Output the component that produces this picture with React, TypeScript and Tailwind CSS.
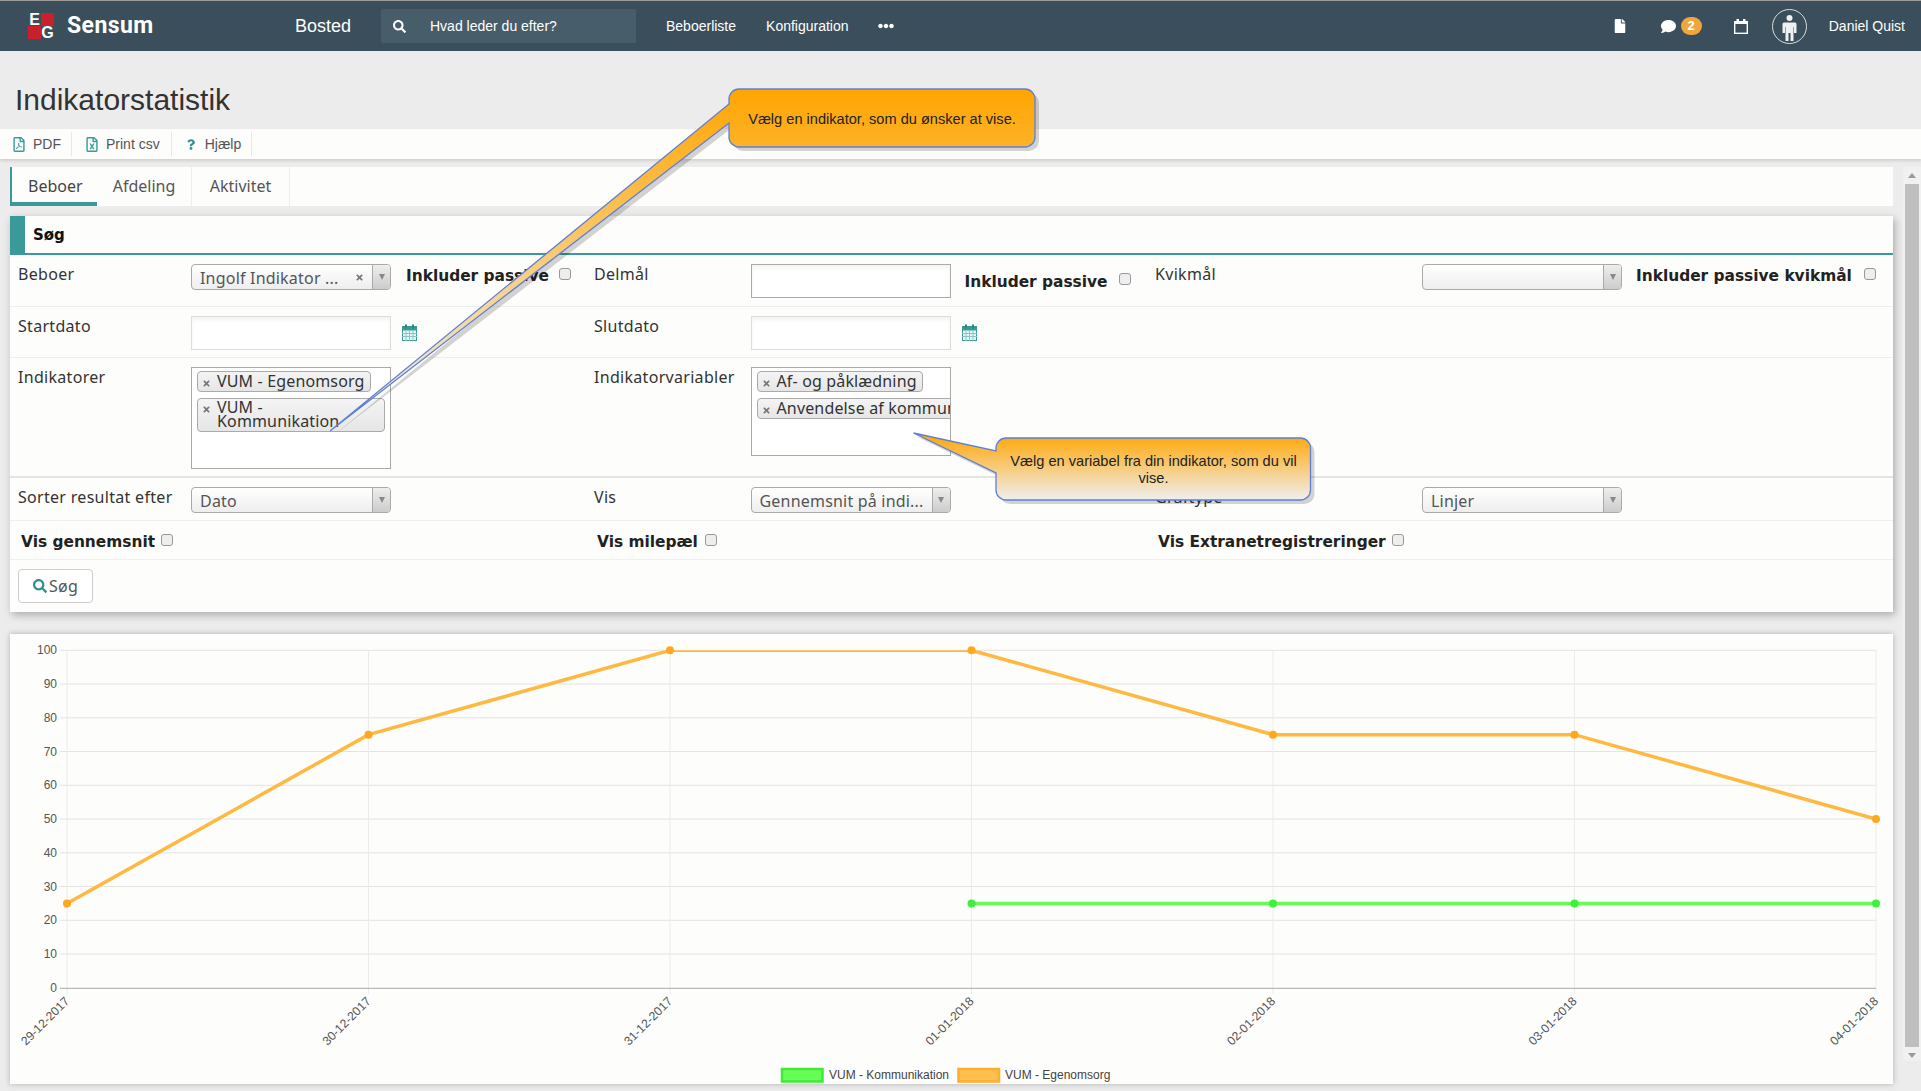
import React from "react";
import { FaSearch, FaRegFilePdf, FaRegFileExcel, FaQuestion, FaFile, FaComment, FaEllipsisH, FaTimes } from "react-icons/fa";

const Arrow = () => (
  <svg width="8" height="6" viewBox="0 0 8 6"><path d="M1 0h6L4 6z" fill="#888" /></svg>
);

const Check = () => (
  <input type="checkbox" className="appearance-none w-[12px] h-[12px] rounded-[3px] border border-[#999] bg-[#eeeeee] shrink-0 block" />
);

const Select = ({ text, clear, narrowText }: { text?: string; clear?: boolean; narrowText?: boolean }) => (
  <div className="w-[200px] h-[26px] shrink-0 flex rounded-[4px] border border-[#aaa] bg-gradient-to-b from-white to-[#eeeeee] overflow-hidden">
    <div className={"flex-1 flex items-center justify-between pl-[8px] pt-[1px] text-[#555] text-[16px] tracking-[0.2px] leading-[20px] whitespace-nowrap overflow-hidden " + (narrowText ? "pr-[2px]" : "pr-[8px]")}>
      <span>{text}</span>
      {clear && <FaTimes className="text-[#777] text-[9px] shrink-0" />}
    </div>
    <div className="w-[18px] shrink-0 border-l border-[#aaa] bg-gradient-to-b from-[#eeeeee] to-[#cccccc] flex items-center justify-center">
      <Arrow />
    </div>
  </div>
);

const Input = ({ h, light }: { h: number; light?: boolean }) => (
  <div
    className={"w-[200px] shrink-0 bg-white border shadow-[inset_0_3px_4px_rgba(0,0,0,0.05)] " + (light ? "border-[#dddddd]" : "border-[#aaaaaa]")}
    style={{ height: h }}
  />
);

const Cal = () => (
  <svg width="15" height="17" viewBox="0 0 15 17" className="shrink-0">
    <rect x="0.5" y="2.5" width="14" height="14" fill="#e8f4f4" stroke="#3a9a9a" strokeWidth="1" />
    <rect x="0.5" y="2.5" width="14" height="4" fill="#3a9a9a" />
    <rect x="3" y="0.5" width="2" height="4" fill="#2e8585" />
    <rect x="10" y="0.5" width="2" height="4" fill="#2e8585" />
    <path d="M0 9.5h15M0 12.5h15M4 6v11M7.5 6v11M11 6v11" stroke="#8cc4c4" strokeWidth="1" />
  </svg>
);

const Tag = ({ children, className }: { children: React.ReactNode; className?: string }) => (
  <div className={"flex items-start border border-[#aaa] rounded-[4px] bg-gradient-to-b from-[#f4f4f4] to-[#e6e6e6] text-[#333] text-[16px] tracking-[0.15px] leading-[14px] shrink-0 whitespace-nowrap " + (className ?? "")}>
    <FaTimes className="text-[#777] text-[9px] ml-[4px] mr-[6px] mt-[5px] shrink-0" />
    <span>{children}</span>
  </div>
);

const Label = ({ w, children }: { w: number; children: React.ReactNode }) => (
  <div className="shrink-0 text-[16px] tracking-[0.3px] leading-[20px] text-[#333]" style={{ width: w }}>{children}</div>
);

const Bold = ({ children, className }: { children: React.ReactNode; className?: string }) => (
  <span className={"font-['DejaVu_Sans',sans-serif] font-bold text-[15.4px] leading-[20px] text-[#222] whitespace-nowrap " + (className ?? "")}>{children}</span>
);

const Row = ({ h, thick, children }: { h: number; thick?: boolean; children: React.ReactNode }) => (
  <div
    className={"grid grid-cols-[576px_561px_1fr] " + (thick ? "border-b-2 border-[#e4e4e4]" : "border-b border-[#eeeeee]")}
    style={{ height: h }}
  >
    {children}
  </div>
);

const Cell = ({ children, className }: { children?: React.ReactNode; className?: string }) => (
  <div className={"flex items-start pl-[8px] pt-[9px] " + (className ?? "")}>{children}</div>
);

const xs = [67, 368.5, 670, 971.5, 1273, 1574.5, 1876];
const dates = ["29-12-2017", "30-12-2017", "31-12-2017", "01-01-2018", "02-01-2018", "03-01-2018", "04-01-2018"];
const yOf = (v: number) => 987.8 - v * 3.375;
const orange = [25, 75, 100, 100, 75, 75, 50];
const green: [number, number][] = [[3, 25], [4, 25], [5, 25], [6, 25]];

const Chart = () => (
  <svg viewBox="10 634 1883 450" width="1883" height="450" className="block">
    <defs>
      <clipPath id="plot"><rect x="67" y="650.3" width="1809" height="338" /></clipPath>
    </defs>
    {[0, 10, 20, 30, 40, 50, 60, 70, 80, 90, 100].map((v) => (
      <g key={v}>
        {v > 0 && <line x1="60" x2="1876" y1={yOf(v)} y2={yOf(v)} stroke="#e3e3e3" strokeWidth="1" />}
        <text x="57" y={yOf(v) + 4} textAnchor="end" fontSize="12" fill="#555" fontFamily="Liberation Sans">{v}</text>
      </g>
    ))}
    {xs.map((x) => (
      <line key={x} x1={x} x2={x} y1="650" y2="994" stroke="#ececec" strokeWidth="1" />
    ))}
    <line x1="60" x2="1876" y1="988.3" y2="988.3" stroke="#a8a8a8" strokeWidth="1" />
    {xs.map((x, i) => (
      <text key={x} x={x + 3} y="1002" textAnchor="end" fontSize="12.2" fill="#555" fontFamily="Liberation Sans" transform={`rotate(-45 ${x + 3} 1002)`}>{dates[i]}</text>
    ))}
    <g clipPath="url(#plot)">
      <polyline fill="none" stroke="#ffb840" strokeWidth="3.5" points={orange.map((v, i) => `${xs[i]},${yOf(v)}`).join(" ")} />
      <polyline fill="none" stroke="#66fb55" strokeWidth="3.5" points={green.map(([i, v]) => `${xs[i]},${yOf(v)}`).join(" ")} />
    </g>
    {orange.map((v, i) => <circle key={i} cx={xs[i]} cy={yOf(v)} r="4" fill="#ffa81e" />)}
    {green.map(([i, v]) => <circle key={i} cx={xs[i]} cy={yOf(v)} r="4" fill="#3df03d" />)}
    <rect x="782" y="1069" width="40.5" height="12.5" fill="#66ff55" stroke="#42e83a" strokeWidth="2.5" />
    <text x="829" y="1079" fontSize="12" fill="#444" fontFamily="Liberation Sans">VUM - Kommunikation</text>
    <rect x="958.5" y="1069" width="40.5" height="12.5" fill="#ffc04f" stroke="#ffad2a" strokeWidth="2.5" />
    <text x="1005" y="1079" fontSize="12" fill="#444" fontFamily="Liberation Sans">VUM - Egenomsorg</text>
  </svg>
);

const bubble1 = "M739,89 H1025 A10,10 0 0 1 1035,99 V137 A10,10 0 0 1 1025,147 H739 A10,10 0 0 1 729,137 V123 L330,431 L729,104 V99 A10,10 0 0 1 739,89 Z";
const bubble2 = "M1006,438 H1300.5 A10,10 0 0 1 1310.5,448 V490 A10,10 0 0 1 1300.5,500 H1006 A10,10 0 0 1 996,490 V473 L913.5,433 L996,451 V448 A10,10 0 0 1 1006,438 Z";

const Callouts = () => (
  <>
    <svg viewBox="0 0 1921 1091" width="1921" height="1091" className="absolute left-0 top-0 pointer-events-none">
      <defs>
        <linearGradient id="g1" gradientUnits="userSpaceOnUse" x1="0" y1="89" x2="0" y2="431">
          <stop offset="0" stopColor="#ffa500" />
          <stop offset="1" stopColor="#f2f2f0" />
        </linearGradient>
        <linearGradient id="g2" gradientUnits="userSpaceOnUse" x1="0" y1="433" x2="0" y2="500">
          <stop offset="0" stopColor="#ffa500" />
          <stop offset="1" stopColor="#efefef" />
        </linearGradient>
      </defs>
      <path d={bubble1} fill="#000" opacity="0.17" transform="translate(4 4)" />
      <path d={bubble1} fill="url(#g1)" stroke="#5f7ed6" strokeWidth="1.3" />
      <path d={bubble2} fill="#000" opacity="0.17" transform="translate(4 4)" />
      <path d={bubble2} fill="url(#g2)" stroke="#5f7ed6" strokeWidth="1.3" />
    </svg>
    <div className="absolute left-[729px] top-[91px] w-[306px] h-[58px] flex items-center justify-center text-[14.6px] text-[#222]">
      Vælg en indikator, som du ønsker at vise.
    </div>
    <div className="absolute left-[1004px] top-[453px] w-[299px] text-center text-[14.6px] leading-[17px] text-[#222]">
      Vælg en variabel fra din indikator, som du vil vise.
    </div>
  </>
);

const Logo = () => (
  <div className="grid grid-cols-[13px_13px] grid-rows-[13px_13px] font-bold text-white text-[16px] leading-[13px] text-center w-[26px] h-[26px]">
    <span>E</span>
    <span className="bg-[#c8202c]" />
    <span className="bg-[#c8202c]" />
    <span>G</span>
  </div>
);

export default function App() {
  return (
    <div className="relative w-[1921px] h-[1091px] overflow-hidden bg-[#ececec] font-['Liberation_Sans',Arial,sans-serif]">
      <header className="h-[51px] bg-[#3a4f5b] border-t border-[#9a9a9a] flex items-center text-white text-[14px]">
        <div className="ml-[28px] w-[39px]"><Logo /></div>
        <span className="font-['Roboto',sans-serif] font-bold text-[23px] leading-none w-[228px] -mt-[2px] tracking-[0.4px]">Sensum</span>
        <span className="text-[18px] w-[86px]">Bosted</span>
        <div className="w-[255px] h-[34px] rounded-[2px] bg-[#475d69] flex items-center pl-[12px] mr-[30px]">
          <FaSearch className="text-[13px] mr-[24px]" />
          <span>Hvad leder du efter?</span>
        </div>
        <span className="mr-[30px]">Beboerliste</span>
        <span className="mr-[29px]">Konfiguration</span>
        <FaEllipsisH className="text-[16px]" />
        <div className="ml-auto flex items-center">
          <FaFile className="text-[14px] mr-[34px]" />
          <FaComment className="text-[15px] mr-[5px]" />
          <span className="w-[21px] h-[18px] rounded-full bg-[#f0a63f] font-bold text-[13px] flex items-center justify-center mr-[32px]">2</span>
          <svg width="14" height="15" viewBox="0 0 14 15" className="mr-[24px]">
            <rect x="0.7" y="2.7" width="12.6" height="11.6" fill="none" stroke="#fff" strokeWidth="1.4" />
            <rect x="0" y="2" width="14" height="3" fill="#fff" />
            <rect x="2.5" y="0" width="2.5" height="3" fill="#fff" />
            <rect x="9" y="0" width="2.5" height="3" fill="#fff" />
          </svg>
          <svg width="35" height="35" viewBox="0 0 35 35" className="mr-[22px]">
            <circle cx="17.5" cy="17.5" r="17" fill="none" stroke="#d8dde0" strokeWidth="1" />
            <circle cx="17.5" cy="9" r="3" fill="#eef0f2" />
            <path d="M12 13.5h11a1.500 1.500 0 0 1 1.500 1.500V24H22v-6h-.5v14h-3v-8h-2v8h-3V18H13v6h-2.500V15A1.500 1.500 0 0 1 12 13.500z" fill="#eef0f2" />
          </svg>
          <span className="mr-[16px]">Daniel Quist</span>
        </div>
      </header>

      <div className="h-[78px] pl-[15px] pt-[31px] text-[30px] leading-[36px] text-[#333]">Indikatorstatistik</div>

      <div className="h-[30px] bg-[#fdfdfb] shadow-[0_2px_3px_rgba(0,0,0,0.12)] flex items-center text-[14px] text-[#555] pl-[13px]">
        <div className="flex items-center h-[24px] pr-[10px] border-r border-[#e8e8e8]">
          <FaRegFilePdf className="text-[#3a9a9a] w-[12px] h-[15px] mr-[8px]" />PDF
        </div>
        <div className="flex items-center h-[24px] pl-[14px] pr-[11px] border-r border-[#e8e8e8]">
          <FaRegFileExcel className="text-[#3a9a9a] w-[12px] h-[15px] mr-[8px]" />Print csv
        </div>
        <div className="flex items-center h-[24px] pl-[15px] pr-[10px] border-r border-[#e8e8e8]">
          <FaQuestion className="text-[#2e8f8f] w-[8px] h-[11px] mr-[10px]" />Hjælp
        </div>
      </div>

      <div className="flex pt-[8px] pl-[10px] gap-[10px] h-[902px]">
        <main className="w-[1883px] shrink-0 font-['Noto_Sans',sans-serif]">
          <nav className="h-[39px] bg-[#fdfdfb] flex text-[16px] text-[#555]">
            <div className="w-[87px] border-l-2 border-b-4 border-[#3a9a9a] pl-[16px] pt-[2px] flex items-center text-[#444]">Beboer</div>
            <div className="w-[95px] pb-[2px] border-r border-[#eeeeee] flex items-center justify-center">Afdeling</div>
            <div className="w-[98px] pb-[2px] border-r border-[#eeeeee] flex items-center justify-center">Aktivitet</div>
          </nav>

          <section className="mt-[10px] bg-[#fdfdfb] shadow-[2px_3px_8px_rgba(0,0,0,0.28)]">
            <div className="h-[39px] flex border-b-2 border-[#3a9a9a]">
              <div className="w-[15px] bg-[#3a9a9a]" />
              <span className="pl-[8px] font-['DejaVu_Sans',sans-serif] font-bold text-[15px] text-[#111] leading-[39px]">Søg</span>
            </div>

            <Row h={52}>
              <Cell>
                <Label w={173}>Beboer</Label>
                <Select text="Ingolf Indikator ..." clear />
                <Bold className="ml-[15px] mt-[2px]">Inkluder passive</Bold>
                <span className="ml-[10px] mt-[4px]"><Check /></span>
              </Cell>
              <Cell>
                <Label w={156.5}>Delmål</Label>
                <Input h={34} />
                <Bold className="ml-[14px] mt-[8px]">Inkluder passive</Bold>
                <span className="ml-[11px] mt-[9px]"><Check /></span>
              </Cell>
              <Cell>
                <Label w={267}>Kvikmål</Label>
                <Select />
                <Bold className="ml-[14px] mt-[2px]">Inkluder passive kvikmål</Bold>
                <span className="ml-[12px] mt-[4px]"><Check /></span>
              </Cell>
            </Row>

            <Row h={51}>
              <Cell>
                <Label w={173}>Startdato</Label>
                <Input h={34} light />
                <span className="ml-[11px] mt-[8px]"><Cal /></span>
              </Cell>
              <Cell>
                <Label w={156.5}>Slutdato</Label>
                <Input h={34} light />
                <span className="ml-[11px] mt-[8px]"><Cal /></span>
              </Cell>
              <Cell />
            </Row>

            <Row h={120} thick>
              <Cell>
                <Label w={173}>Indikatorer</Label>
                <div className="w-[200px] h-[102px] shrink-0 bg-white border border-[#aaa] pl-[5px] pt-[3px] flex flex-col items-start gap-[6px] overflow-hidden">
                  <Tag className="h-[21px] pt-[2px] pr-[5px]">VUM - Egenomsorg</Tag>
                  <Tag className="w-[188px] h-[34px] pt-[1px] whitespace-normal">VUM -<br />Kommunikation</Tag>
                </div>
              </Cell>
              <Cell>
                <Label w={156.5}>Indikatorvariabler</Label>
                <div className="w-[200px] h-[89px] shrink-0 bg-white border border-[#aaa] pl-[5px] pt-[3px] flex flex-col items-start gap-[6px] overflow-hidden">
                  <Tag className="h-[21px] pt-[2px] pr-[5px]">Af- og påklædning</Tag>
                  <Tag className="h-[21px] pt-[2px] pr-[5px]">Anvendelse af kommunikation</Tag>
                </div>
              </Cell>
              <Cell />
            </Row>

            <Row h={43}>
              <Cell>
                <Label w={173}>Sorter resultat efter</Label>
                <Select text="Dato" />
              </Cell>
              <Cell>
                <Label w={156.5}>Vis</Label>
                <Select text="Gennemsnit på indi..." narrowText />
              </Cell>
              <Cell>
                <Label w={267}>Graftype</Label>
                <Select text="Linjer" />
              </Cell>
            </Row>

            <Row h={39}>
              <Cell className="pl-[11px] pt-[11px]">
                <Bold>Vis gennemsnit</Bold>
                <span className="ml-[6px] mt-[2px]"><Check /></span>
              </Cell>
              <Cell className="pl-[11px] pt-[11px]">
                <Bold>Vis milepæl</Bold>
                <span className="ml-[7px] mt-[2px]"><Check /></span>
              </Cell>
              <Cell className="pl-[11px] pt-[11px]">
                <Bold>Vis Extranetregistreringer</Bold>
                <span className="ml-[6px] mt-[2px]"><Check /></span>
              </Cell>
            </Row>

            <div className="h-[52px] pl-[8px] pt-[9px]">
              <button className="w-[75px] h-[34px] rounded-[4px] border border-[#ccc] bg-white flex items-center justify-center text-[16px] tracking-[0.3px] text-[#555]">
                <FaSearch className="text-[#2e8f8f] text-[14px] mr-[2px]" />Søg
              </button>
            </div>
          </section>

          <section className="mt-[22px] bg-[#fdfdfb] shadow-[0_0_6px_rgba(0,0,0,0.25)]">
            <Chart />
          </section>
        </main>

        <aside className="w-[18px] bg-[#f1f1f1] flex flex-col items-center">
          <svg width="10" height="17" viewBox="0 0 10 17" className="shrink-0"><path d="M1 11h8L5 6z" fill="#9a9a9a" /></svg>
          <div className="w-[14px] h-[889px] bg-[#bfbfbf]" />
          <svg width="10" height="14" viewBox="0 0 10 14" className="shrink-0"><path d="M1 6h8l-4 5z" fill="#9a9a9a" /></svg>
        </aside>
      </div>

      <Callouts />
    </div>
  );
}
